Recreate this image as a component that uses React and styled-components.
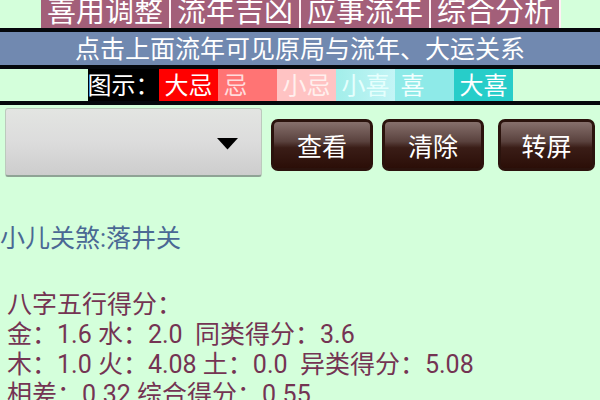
import { useState } from "react";
import styled, { createGlobalStyle } from "styled-components";

const GlobalStyle = createGlobalStyle`
  body {
    margin: 0;
    height: 100vh;
    overflow: hidden;
    box-sizing: border-box;
    background-color: #d4ffdb;
    font-family: Roboto, "Noto Sans CJK SC", sans-serif;
  }

  * {
    box-sizing: inherit;
  }

  button, select {
    font-family: inherit;
  }
`;

const Tabs = styled.nav`
  display: flex;
  justify-content: center;
  align-items: flex-end;
  gap: 2px;
  height: 28px;
  overflow: hidden;
`;

const Tab = styled.button`
  width: 128px;
  height: 32px;
  flex-shrink: 0;
  padding: 0;
  border: none;
  background-color: #a35f79;
  box-shadow: 2px 0 0 #fff0f4;
  color: #fff;
  font-size: 29px;
  line-height: 32px;
  white-space: nowrap;
  cursor: pointer;
`;

const Notice = styled.p`
  margin: 0;
  padding-top: 3px;
  border-top: 4px solid #05080c;
  border-bottom: 4px solid #05080c;
  background-color: #7189b0;
  color: #fff;
  font-size: 25px;
  line-height: 30px;
  text-align: center;
`;

const Legend = styled.div`
  display: flex;
  justify-content: center;
  border-bottom: 4px solid #05080c;
  font-size: 24px;
  line-height: 30px;
`;

const LegendTitle = styled.span`
  width: 71px;
  padding-top: 2px;
  background-color: #000;
  color: #fff;
  white-space: nowrap;
`;

const LegendItem = styled.span`
  width: 59px;
  padding: 2px 0 0 6px;
  background: ${(props) => props.$color};
  color: ${(props) => props.$text || "#fff"};
  white-space: nowrap;
`;

const Toolbar = styled.div`
  display: flex;
  align-items: flex-start;
  gap: 9px;
  padding: 3px 5px 0;
`;

const SelectBox = styled.div`
  position: relative;
  flex: 1;
`;

const Select = styled.select`
  display: block;
  width: 100%;
  height: 69px;
  padding: 0 50px 0 12px;
  appearance: none;
  border: 1px solid #bccabd;
  border-bottom: 2px solid #8fa395;
  border-radius: 3px;
  background: linear-gradient(#e3e5e2, #dcdcdc 50%, #cdcdcd);
  color: #000;
  font-size: 25px;
`;

const Arrow = styled.svg`
  position: absolute;
  right: 24px;
  top: 30px;
  pointer-events: none;
`;

const Actions = styled.div`
  display: flex;
  gap: 9px;
  padding-top: 11px;
`;

const ActionButton = styled.button`
  width: ${(props) => (props.$last ? "97px" : "102px")};
  height: 52px;
  margin-left: ${(props) => (props.$last ? "5px" : "0")};
  padding: 5px 0 0;
  border: 3px solid #2b130d;
  border-radius: 7px;
  background: linear-gradient(#86706c, #5a423e 42%, #3a1d17 56%, #2b0e07);
  color: #fff;
  font-size: 25px;
  line-height: 32px;
  cursor: pointer;
`;

const Omen = styled.p`
  margin: 47px 0 0;
  color: #4a6894;
  font-size: 25px;
  line-height: 30px;
`;

const Scores = styled.section`
  margin-top: 36px;
  padding-left: 7px;
  color: #743453;
  font-size: 25px;
  line-height: 30px;
`;

const ScoreLine = styled.p`
  margin: 0;
  white-space: pre;
`;

const tabs = ["喜用调整", "流年吉凶", "应事流年", "综合分析"];

const legend = [
  { label: "大忌", color: "#ff0000" },
  { label: "忌", color: "#ff7474", text: "#ffdcdc" },
  { label: "小忌", color: "#ffc3c3", text: "#fff0ee" },
  { label: "小喜", color: "linear-gradient(90deg, #a2eeea, #c4f5f6)", text: "#e6fffd" },
  { label: "喜", color: "#8eeae8", text: "#f2fffe" },
  { label: "大喜", color: "#27cdc9" },
];

const scores = [
  "八字五行得分：",
  "金：1.6 水：2.0  同类得分：3.6",
  "木：1.0 火：4.08 土：0.0  异类得分：5.08",
  "相差：0.32 综合得分：0.55",
];

const App = () => {
  const [year, setYear] = useState("");

  return (
    <>
      <GlobalStyle />
      <Tabs>
        {tabs.map((tab) => (
          <Tab key={tab}>{tab}</Tab>
        ))}
      </Tabs>
      <Notice>点击上面流年可见原局与流年、大运关系</Notice>
      <Legend>
        <LegendTitle>图示：</LegendTitle>
        {legend.map((item) => (
          <LegendItem key={item.label} $color={item.color} $text={item.text}>
            {item.label}
          </LegendItem>
        ))}
      </Legend>
      <Toolbar>
        <SelectBox>
          <Select
            aria-label="流年"
            value={year}
            onChange={(e) => setYear(e.target.value)}
          >
            <option value=""></option>
          </Select>
          <Arrow width="21" height="12" viewBox="0 0 21 12" aria-hidden="true">
            <path d="M0 0h21L10.500 11.500z" fill="#000" />
          </Arrow>
        </SelectBox>
        <Actions>
          <ActionButton>查看</ActionButton>
          <ActionButton onClick={() => setYear("")}>清除</ActionButton>
          <ActionButton $last>转屏</ActionButton>
        </Actions>
      </Toolbar>
      <Omen>小儿关煞:落井关</Omen>
      <Scores>
        {scores.map((line) => (
          <ScoreLine key={line}>{line}</ScoreLine>
        ))}
      </Scores>
    </>
  );
};

export default App;
